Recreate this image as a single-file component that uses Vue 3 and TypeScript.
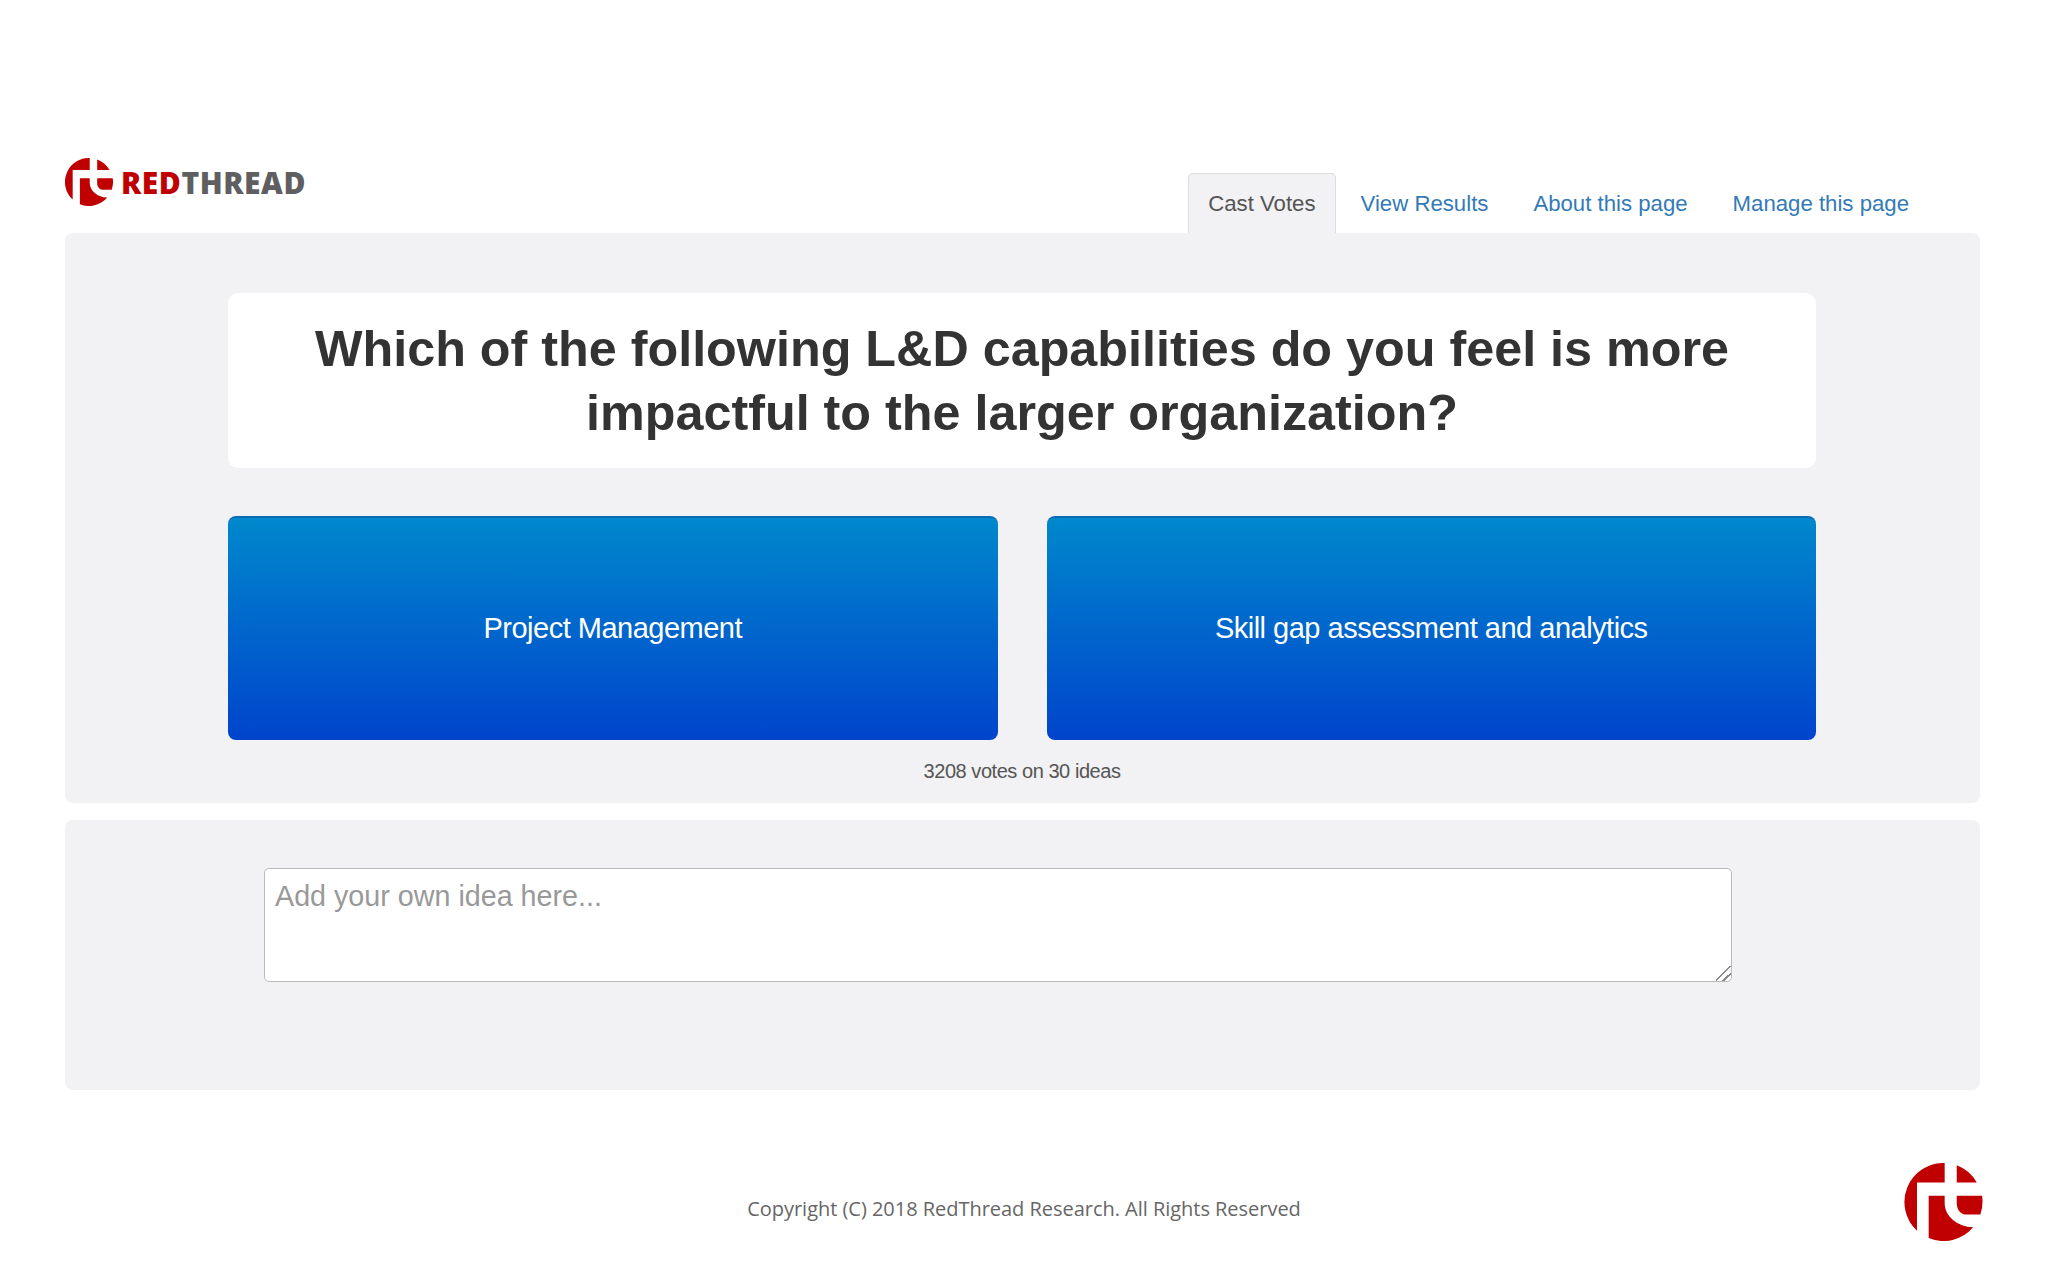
<template>
  <div class="page">
    <header class="top">
      <div class="brand">
        <svg class="mark" viewBox="0 0 100 100" aria-hidden="true">
          <path :d="markLeft" />
          <path :d="markMiddle" />
          <path :d="markTop" />
          <path :d="markRight" />
        </svg>
        <span class="wordmark"><b>RED</b>THREAD</span>
      </div>
      <nav class="tabs">
        <a
          v-for="tab in tabs"
          :key="tab"
          href="#"
          class="tab"
          :class="{ active: tab === activeTab }"
          @click.prevent="activeTab = tab"
        >{{ tab }}</a>
      </nav>
    </header>

    <section class="panel vote">
      <h1 class="question">Which of the following L&amp;D capabilities do you feel is more impactful to the larger organization?</h1>
      <div class="choices">
        <button v-for="choice in choices" :key="choice" type="button" class="choice">{{ choice }}</button>
      </div>
      <p class="count">3208 votes on 30 ideas</p>
    </section>

    <section class="panel idea">
      <textarea class="idea-input" placeholder="Add your own idea here..."></textarea>
    </section>

    <footer class="foot">
      <span></span>
      <p class="copy">Copyright (C) 2018 RedThread Research. All Rights Reserved</p>
      <svg class="mark foot-mark" viewBox="0 0 100 100" aria-hidden="true">
        <path :d="markLeft" />
        <path :d="markMiddle" />
        <path :d="markTop" />
        <path :d="markRight" />
      </svg>
    </footer>
  </div>
</template>

<script setup lang="ts">
import { ref } from 'vue'

const tabs = ['Cast Votes', 'View Results', 'About this page', 'Manage this page']
const activeTab = ref('Cast Votes')

const choices = ['Project Management', 'Skill gap assessment and analytics']

// logo pieces, circle of r=50 cut by the white "rt" strokes
const markLeft = 'M51.5 0A50 50 0 0 0 16 86.7V25H51.5Z'
const markMiddle = 'M31 42H51.5V52C51.5 68 68 82 88 82.5A50 50 0 0 1 31 96.3Z'
const markTop = 'M67 3A50 50 0 0 1 92.7 25H67Z'
const markRight = 'M67 42H99.4A50 50 0 0 1 97.3 66H78C72 66 67 60 67 52Z'
</script>

<style>
html,
body {
  margin: 0;
  background: #fff;
}
</style>

<style scoped>
.page {
  padding: 158px 65px 0;
  font-family: "Liberation Sans", Arial, sans-serif;
  color: #333;
}

.top {
  display: flex;
  justify-content: space-between;
  margin-right: 3px;
  height: 75px;
}

.brand {
  display: flex;
  align-items: center;
  gap: 8px;
  height: 48px;
}

.mark {
  display: block;
  width: 48px;
  height: 48px;
  fill: #c00000;
}

.wordmark {
  font-family: "Open Sans", sans-serif;
  font-weight: 800;
  font-size: 30px;
  letter-spacing: 0.55px;
  color: #5f5f61;
}

.wordmark b {
  font-weight: 800;
  color: #c00000;
}

.tabs {
  display: flex;
  align-self: flex-end;
  gap: 5px;
  margin-right: 51px;
}

.tab {
  display: block;
  height: 60px;
  box-sizing: border-box;
  padding: 16px 19px 0;
  font-size: 22.2px;
  line-height: 28px;
  color: #337ab7;
  text-decoration: none;
  border: 1px solid transparent;
  border-bottom: 0;
  border-radius: 5px 5px 0 0;
}

.tab.active {
  background: #f2f1f3;
  border-color: #ddd;
  color: #555;
}

.panel {
  margin-right: 3px;
  background: #f2f1f3;
  border-radius: 8px;
}

.vote {
  padding: 60px 164px 0 163px;
  height: 570px;
  box-sizing: border-box;
}

.question {
  margin: 0;
  padding: 24px 70px 23px;
  background: #fff;
  border-radius: 10px;
  text-align: center;
  font-size: 50.3px;
  line-height: 64px;
  font-weight: 700;
  color: #333;
}

.choices {
  display: grid;
  grid-template-columns: 1fr 1fr;
  gap: 49px;
  margin-top: 48px;
}

.choice {
  height: 224px;
  padding: 0 0 2px;
  border: 0;
  border-top: 2px solid #0a6db5;
  border-radius: 8px;
  background: linear-gradient(#0088cc, #0044cc);
  color: #fff;
  font-family: inherit;
  font-size: 29px;
  letter-spacing: -0.5px;
  cursor: pointer;
}

.count {
  margin: 17px 0 0;
  text-align: center;
  font-size: 20px;
  letter-spacing: -0.45px;
  line-height: 28px;
  color: #555;
}

.idea {
  margin-top: 17px;
  padding: 48px 248px 108px 199px;
}

.idea-input {
  display: block;
  width: 100%;
  height: 114px;
  box-sizing: border-box;
  padding: 9px 10px;
  border: 1px solid #bbb;
  border-radius: 5px;
  background: #fff;
  font-family: inherit;
  font-size: 28.7px;
  line-height: 36px;
  color: #555;
}

.idea-input::placeholder {
  color: #999;
}

.idea-input::-webkit-resizer {
  background: linear-gradient(135deg, transparent 0 46%, #888 46% 53%, transparent 53% 70%, #888 70% 77%, transparent 77%);
}

.foot {
  display: grid;
  grid-template-columns: 1fr auto 1fr;
  align-items: end;
  margin-top: 73px;
}

.copy {
  margin: 0 0 18px;
  font-family: "Open Sans", sans-serif;
  font-size: 20px;
  letter-spacing: -0.03px;
  line-height: 28px;
  color: #666;
}

.foot-mark {
  justify-self: end;
  width: 79px;
  height: 78px;
}
</style>
